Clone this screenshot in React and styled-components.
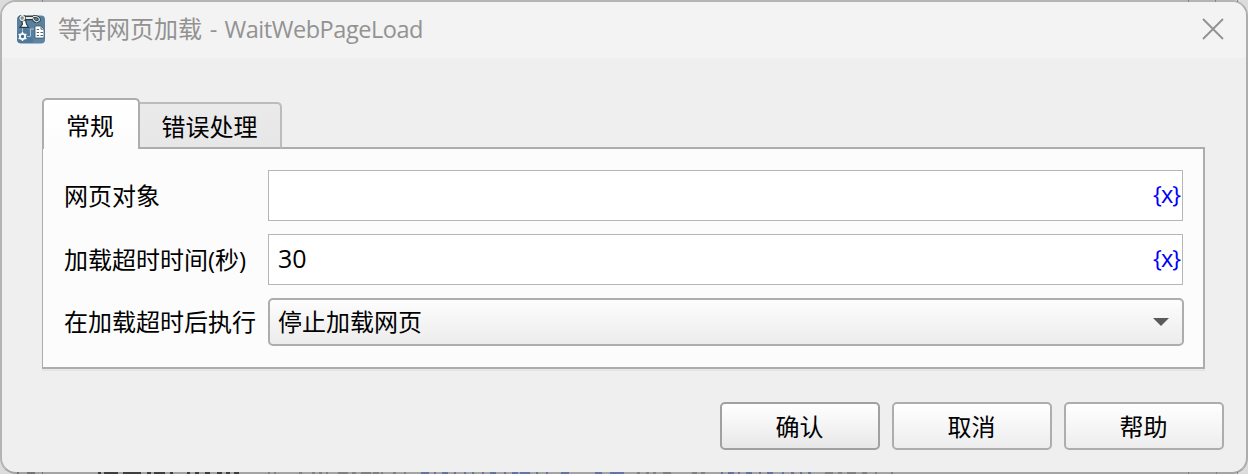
import React from "react";
import styled, { createGlobalStyle } from "styled-components";

const GlobalStyle = createGlobalStyle`
  * { box-sizing: border-box; }
  body {
    margin: 0;
    overflow: hidden;
    background: #dcdcdc;
    color: #000;
    font: 24px/32px "Open Sans", "Noto Sans CJK SC", sans-serif;
  }
`;

const Desktop = styled.div`
  position: relative;
  width: 1248px;
  height: 474px;
  overflow: hidden;
  background: #dcdcdc;
`;

const Frame = styled.main`
  display: flex;
  flex-direction: column;
  width: 1248px;
  height: 474px;
  border: 2px solid #b4b4b4;
  border-right-color: #adadad;
  border-bottom-color: #a4a4a4;
  border-radius: 16px;
  background: #efefef;
  overflow: hidden;
`;

const TitleBar = styled.header`
  display: flex;
  align-items: center;
  flex: none;
  height: 56px;
  padding: 0 22px 2px 15px;
  background: #f3f3f3;
  color: #929292;
`;

const Title = styled.h1`
  flex: 1;
  margin: 0 0 0 12px;
  font-size: 24px;
  font-weight: 400;
  line-height: 32px;
  white-space: pre;
`;

const Latin = styled.span`
  font-size: ${(p) => p.$size || 24}px;
  letter-spacing: ${(p) => p.$spacing || 0}px;
  word-spacing: ${(p) => p.$wordSpacing || 0}px;
`;

const CloseButton = styled.button`
  display: flex;
  padding: 0;
  border: 0;
  background: none;
`;

const Body = styled.section`
  display: flex;
  flex-direction: column;
  flex: 1;
  padding: 40px 22px 22px 40px;
`;

const TabList = styled.div`
  display: flex;
  align-items: flex-end;
  height: 51px;
  margin-bottom: -2px;
  z-index: 1;
`;

const Tab = styled.button`
  width: ${(p) => p.$width}px;
  height: ${(p) => (p.$active ? 51 : 47)}px;
  padding: ${(p) => (p.$active ? "3px 2px 0 0" : "2px 1px 0 0")};
  border: 2px solid ${(p) => (p.$active ? "#adadad" : "#bcbcbc")};
  border-left-width: ${(p) => (p.$active ? 2 : 0)}px;
  border-bottom: ${(p) => (p.$active ? "0" : "2px solid #adadad")};
  border-radius: ${(p) => (p.$active ? "5px 5px 0 0" : "0 5px 0 0")};
  background: ${(p) => (p.$active ? "linear-gradient(#fff, #fcfcfc)" : "linear-gradient(#eaeaea, #e7e7e7)")};
  color: #000;
  font: inherit;
`;

const Pane = styled.div`
  display: flex;
  flex-direction: column;
  width: 1163px;
  height: 222px;
  padding: 21px 19px 0 21px;
  border: 2px solid #adadad;
  border-left-width: 1px;
  background: #fcfcfc;
  box-shadow: 0 1px #e9e9e9, 0 2px #e2e2e2;
`;

const Field = styled.label`
  display: flex;
  align-items: flex-start;
  height: 64px;
`;

const Label = styled.span`
  width: 204px;
  flex: none;
  padding-top: ${(p) => p.$top}px;
  white-space: nowrap;
`;

const Entry = styled.span`
  display: flex;
  align-items: center;
  justify-content: space-between;
  width: 915px;
  height: 51px;
  padding: 0 3px 3px 9px;
  border: 1px solid #b6b6b6;
  background: #fff;
`;

const Variable = styled.span`
  margin-right: -1px;
  color: #0000f4;
  font-size: 23.5px;
  letter-spacing: -1px;
`;

const Select = styled.span`
  display: flex;
  align-items: center;
  justify-content: space-between;
  width: 916px;
  height: 48px;
  padding: 0 13px 0 8px;
  border: 2px solid #adadad;
  border-radius: 5px;
  background: linear-gradient(#fdfdfd, #ececec);
`;

const Actions = styled.footer`
  display: flex;
  justify-content: flex-end;
  gap: 12px;
  margin-top: auto;
`;

const Button = styled.button`
  width: 160px;
  height: 48px;
  padding: 2px 1px 0 0;
  border: 2px solid ${(p) => (p.$primary ? "#a0a0a0" : "#adadad")};
  border-radius: 5px;
  background: linear-gradient(#fff, ${(p) => (p.$primary ? "#e8e8e8" : "#ededed")});
  color: #000;
  font: inherit;
`;

const EdgeLayer = styled.svg`
  position: absolute;
  inset: 0;
  pointer-events: none;
`;

function AppIcon() {
  return (
    <svg width="29" height="29" viewBox="0 0 29 29" fill="none">
      <rect x="0" y="0.5" width="28" height="28" rx="4" fill="#5880a0" />
      <path d="M0 18 9 12 18 28H4Q0 28 0 24Z" fill="#426e92" opacity=".4" />
      <path d="M14 28 28 13V24Q28 28 24 28Z" fill="#6189a8" opacity=".6" />
      <path d="M5 3H17" stroke="#2b3c47" strokeWidth="4.4" />
      <path d="M3 12.3H11.5L9.5 9 8.5 5H4.5L5.5 9Z" fill="#fff" stroke="#2b3c47" strokeWidth="1.2" />
      <path d="M6 3H17" stroke="#e8e8e0" strokeWidth="2.2" />
      <circle cx="5.2" cy="3" r="2.5" fill="#7e8e93" stroke="#2b3c47" strokeWidth="2.2" />
      <circle cx="5.2" cy="3" r="2.3" fill="#7e8e93" stroke="#f1f1e9" strokeWidth="1.2" />
      <path d="M16 1.5H19Q23 2.5 22.3 5.5L19.5 7M16 3.5Q17 6.5 19.5 7" stroke="#2c3941" strokeWidth="2.6" />
      <path d="M16 1.5H19Q23 2.5 22.3 5.5L19.5 7M16 3.5Q17 6.5 19.5 7" stroke="#dce2df" strokeWidth="1.1" />
      <path d="M5.5 13.5V17M10 21.5H13.5V14H17" stroke="#a9c3d3" />
      <circle cx="5.5" cy="21.5" r="2.6" fill="#416b8c" stroke="#f8fafb" strokeWidth="1.8" />
      <path d="M5.5 17V19M5.5 24V26M1.6 19.2 3.2 20.2M7.8 22.8 9.4 23.8M9.4 19.2 7.8 20.2M3.2 22.8 1.6 23.8" stroke="#fff" strokeWidth="1.4" />
      <path d="M18 11H24L27 14V23H18Z" fill="#fff" stroke="#3e5361" strokeWidth=".8" />
      <path d="M19.7 14.5H22M19.7 17.5H22M23.5 17.5H26M19.7 20.5H22M23.5 20.5H26M24 11.5V14.2H26.5" stroke="#4a6475" />
    </svg>
  );
}

function Backdrop() {
  return (
    <EdgeLayer width="1248" height="474" shapeRendering="crispEdges">
      <path d="M42.5 0V2M1188.5 0V2M1215.5 0V2M1237.5 0V2" stroke="#858585" />
      <g strokeWidth="2">
        <path d="M17 473H19M27 473H35M42 473H43" stroke="#747474" />
        <path d="M98 473H101M104 473H118M123 473H141M147 473H151M154 473H165M170 473H173M187 473H190M195 473H199M205 473H210M217 473H222M226 473H230M234 473H239" stroke="#3e3e3e" />
        <path d="M268 473H270M274 473H276M299 473H302M312 473H315M319 473H322M326 473H328M338 473H348M352 473H356M361 473H371M373 473H379M381 473H383M393 473H396M404 473H406" stroke="#808080" />
        <path d="M421 473H429M434 473H436M442 473H448M454 473H456M464 473H466M472 473H474M482 473H484M490 473H496M504 473H506M512 473H518M520 473H530M536 473H538M546 473H548M561 473H569M595 473H602M610 473H624" stroke="#6273a8" />
        <path d="M637 473H640M646 473H649M653 473H656M663 473H671M692 473H697M701 473H705" stroke="#808080" />
        <path d="M721 473H723M728 473H734M738 473H740M746 473H752M759 473H761M767 473H773M782 473H784M791 473H794M800 473H802M808 473H811" stroke="#6273a8" />
        <path d="M825 473H833M838 473H842M847 473H856M862 473H867M875 473H877M891 473H893M1188 473H1189M1216 473H1217M1237 473H1238" stroke="#808080" />
      </g>
    </EdgeLayer>
  );
}

export default function App() {
  return (
    <Desktop>
      <GlobalStyle />
      <Frame>
        <TitleBar>
          <AppIcon />
          <Title>等待网页加载<Latin $size={23.5} $spacing={-0.45} $wordSpacing={2}> - WaitWebPageLoad</Latin></Title>
          <CloseButton aria-label="关闭">
            <svg width="22" height="22" viewBox="0 0 22 22">
              <path d="M1 1 21 21M21 1 1 21" stroke="#929292" strokeWidth="1.8" />
            </svg>
          </CloseButton>
        </TitleBar>
        <Body>
          <TabList>
            <Tab $active $width={98}>常规</Tab>
            <Tab $width={142}>错误处理</Tab>
          </TabList>
          <Pane>
            <Field>
              <Label $top={10}>网页对象</Label>
              <Entry><span /><Variable>{"{x}"}</Variable></Entry>
            </Field>
            <Field>
              <Label $top={10}>加载超时时间(秒)</Label>
              <Entry><Latin $size={25}>30</Latin><Variable>{"{x}"}</Variable></Entry>
            </Field>
            <Field>
              <Label $top={8}>在加载超时后执行</Label>
              <Select>
                停止加载网页
                <svg width="16" height="8" viewBox="0 0 16 8"><path d="M0 0H16L8 8Z" fill="#5a5a5a" /></svg>
              </Select>
            </Field>
          </Pane>
          <Actions>
            <Button $primary>确认</Button>
            <Button>取消</Button>
            <Button>帮助</Button>
          </Actions>
        </Body>
      </Frame>
      <Backdrop />
    </Desktop>
  );
}
